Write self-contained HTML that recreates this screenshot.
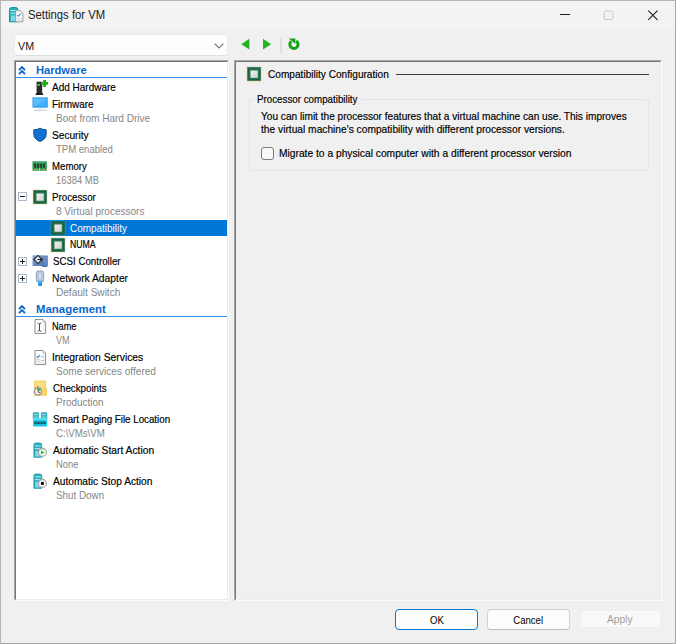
<!DOCTYPE html>
<html>
<head>
<meta charset="utf-8">
<title>Settings for VM</title>
<style>
*{box-sizing:border-box;margin:0;padding:0}
html,body{width:676px;height:644px;overflow:hidden;background:#f0f0f0}
body{position:relative;font-family:"Liberation Sans",sans-serif;font-size:11px;color:#000}
.abs{position:absolute}
#win{position:absolute;left:0;top:0;width:676px;height:644px;background:#f0f0f0;border:1px solid #b6b6b6;border-right-color:#a6a6a6;border-bottom-color:#a6a6a6}
#title{position:absolute;left:1px;top:1px;width:674px;height:29px;background:#f3f3f3}
#ttext{position:absolute;left:28.1px;top:8px;font-size:12px;line-height:14px;color:#1a1a1a;white-space:nowrap;transform:scaleX(0.94);transform-origin:0 0}
#combo{position:absolute;left:14px;top:34px;width:214px;height:22px;background:#fdfdfd;border:1px solid #ebebeb;border-bottom-color:#e0e0e0;border-radius:3px}
#combo span{position:absolute;left:3px;top:4px;font-size:11.5px;line-height:14px;color:#1a1a1a;transform:scaleX(0.93);transform-origin:0 0}
.panel{position:absolute;top:60px;height:541px;border-top:1px solid #a8a8a8;border-left:1px solid #a8a8a8;border-right:1px solid #fdfdfd;border-bottom:1px solid #fdfdfd}
.panel i{position:absolute;left:0;top:0;right:0;bottom:0;border-top:1px solid #747474;border-left:1px solid #747474;border-right:1px solid #ececec;border-bottom:1px solid #ececec}
#tree{left:14px;width:215px;background:#fff}
#right{left:234px;width:428px;background:#f0f0f0}
.t{position:absolute;white-space:nowrap;line-height:14px;font-size:11px;transform:scaleX(0.92);transform-origin:0 0}
.n{color:#000;-webkit-text-stroke:0.18px #000}
.w{color:#fff}
.s{color:#868686}
.h{color:#0a64cc;font-weight:bold;transform:scaleX(1.04)}
.hl{position:absolute;left:16px;width:211px;height:1px;background:#3a8ee6}
.btn{position:absolute;top:609px;width:83px;height:21px;border-radius:4px;background:#fdfdfd;border:1px solid #d0d0d0;border-bottom-color:#bcbcbc;text-align:center;font-size:11px;line-height:19px}
.btn span{display:inline-block;transform:scaleX(0.87);position:relative;top:0.7px}
</style>
</head>
<body>
<svg width="0" height="0" style="position:absolute"><defs>
<linearGradient id="gsil" x1="0" y1="0" x2="1" y2="1"><stop offset="0" stop-color="#f4f4f4"/><stop offset="0.5" stop-color="#e2e2e2"/><stop offset="1" stop-color="#cfcfcf"/></linearGradient>
<linearGradient id="gmon" x1="0" y1="0" x2="1" y2="1"><stop offset="0" stop-color="#63c4ff"/><stop offset="0.5" stop-color="#55bcff"/><stop offset="0.55" stop-color="#45b0fb"/><stop offset="1" stop-color="#3aa8f6"/></linearGradient>
<linearGradient id="gscsi" x1="0" y1="0" x2="1" y2="1"><stop offset="0" stop-color="#8fb0dc"/><stop offset="0.5" stop-color="#5f88bf"/><stop offset="1" stop-color="#3f68a0"/></linearGradient>
</defs></svg>
<div id="win"></div>
<div id="title"></div>
<div id="ttext">Settings for VM</div>
<div id="combo"><span>VM</span></div>
<div id="tree" class="panel"><i></i></div>
<div id="right" class="panel"><i></i></div>
<div class="hl" style="top:77px"></div>
<div class="hl" style="top:316px"></div>
<div class="abs" style="left:16px;top:220px;width:211px;height:16px;background:#0078d7"></div>
<div class="abs" style="left:396px;top:74px;width:253px;height:1px;background:#3c3c3c"></div>
<div class="abs" style="left:249px;top:99px;width:400px;height:72px;border:1px solid #e4e4e4;border-radius:3px"></div>
<div class="abs" style="left:254px;top:94px;width:107px;height:10px;background:#f0f0f0"></div>
<div class="abs" style="left:261px;top:147px;width:13px;height:13px;border:1px solid #7c7c7c;border-radius:3px;background:#f8f8f8"></div>
<div class="t h" style="left:35.50px;top:63px;transform:scaleX(1.0124)">Hardware</div>
<div class="t n" style="left:52.40px;top:80px;transform:scaleX(0.9088)">Add Hardware</div>
<div class="t n" style="left:52.40px;top:97px;transform:scaleX(0.9072)">Firmware</div>
<div class="t s" style="left:55.70px;top:111px;transform:scaleX(0.9104)">Boot from Hard Drive</div>
<div class="t n" style="left:52.40px;top:128px;transform:scaleX(0.9208)">Security</div>
<div class="t s" style="left:56.20px;top:142px;transform:scaleX(0.8680)">TPM enabled</div>
<div class="t n" style="left:52.40px;top:159px;transform:scaleX(0.8760)">Memory</div>
<div class="t s" style="left:56.40px;top:173px;transform:scaleX(0.8565)">16384 MB</div>
<div class="t n" style="left:52.40px;top:190px;transform:scaleX(0.8847)">Processor</div>
<div class="t s" style="left:55.70px;top:204px;transform:scaleX(0.9117)">8 Virtual processors</div>
<div class="t w" style="left:70.30px;top:221px;transform:scaleX(0.9041)">Compatibility</div>
<div class="t n" style="left:70.30px;top:237px;transform:scaleX(0.7923)">NUMA</div>
<div class="t n" style="left:52.90px;top:254px;transform:scaleX(0.8838)">SCSI Controller</div>
<div class="t n" style="left:52.40px;top:271px;transform:scaleX(0.9349)">Network Adapter</div>
<div class="t s" style="left:56.20px;top:285px;transform:scaleX(0.9144)">Default Switch</div>
<div class="t h" style="left:36.20px;top:302px;transform:scaleX(1.0373)">Management</div>
<div class="t n" style="left:52.40px;top:319px;transform:scaleX(0.8320)">Name</div>
<div class="t s" style="left:56.20px;top:333px;transform:scaleX(0.8251)">VM</div>
<div class="t n" style="left:51.90px;top:350px;transform:scaleX(0.9387)">Integration Services</div>
<div class="t s" style="left:56.20px;top:364px;transform:scaleX(0.9147)">Some services offered</div>
<div class="t n" style="left:52.90px;top:381px;transform:scaleX(0.8841)">Checkpoints</div>
<div class="t s" style="left:56.20px;top:395px;transform:scaleX(0.9049)">Production</div>
<div class="t n" style="left:52.90px;top:412px;transform:scaleX(0.8864)">Smart Paging File Location</div>
<div class="t s" style="left:56.20px;top:426px;transform:scaleX(0.8770)">C:\VMs\VM</div>
<div class="t n" style="left:52.90px;top:443px;transform:scaleX(0.9348)">Automatic Start Action</div>
<div class="t s" style="left:56.20px;top:457px;transform:scaleX(0.8514)">None</div>
<div class="t n" style="left:52.90px;top:474px;transform:scaleX(0.9236)">Automatic Stop Action</div>
<div class="t s" style="left:56.20px;top:488px;transform:scaleX(0.8940)">Shut Down</div>
<div class="t n" style="left:268.40px;top:67px;transform:scaleX(0.9188)">Compatibility Configuration</div>
<div class="t n" style="left:257.10px;top:92px;transform:scaleX(0.8883)">Processor compatibility</div>
<div class="t n" style="left:260.80px;top:109px;transform:scaleX(0.9188)">You can limit the processor features that a virtual machine can use. This improves</div>
<div class="t n" style="left:261.00px;top:121.5px;transform:scaleX(0.9285)">the virtual machine's compatibility with different processor versions.</div>
<div class="t n" style="left:278.60px;top:146px;transform:scaleX(0.9313)">Migrate to a physical computer with a different processor version</div>
<svg class="abs" style="left:18px;top:66px" width="8" height="9" viewBox="0 0 8 9"><path d="M1 4.1 L4 1.1 L7 4.1 M1 8.1 L4 5.1 L7 8.1" fill="none" stroke="#0a64cc" stroke-width="1.9"/></svg>
<svg class="abs" style="left:18px;top:305px" width="8" height="9" viewBox="0 0 8 9"><path d="M1 4.1 L4 1.1 L7 4.1 M1 8.1 L4 5.1 L7 8.1" fill="none" stroke="#0a64cc" stroke-width="1.9"/></svg>
<svg class="abs" style="left:34px;top:79px" width="15" height="17" viewBox="0 0 15 17"><rect x="2.6" y="2.7" width="5.6" height="11.8" fill="#2a2a2a"/><path d="M1.3 15.9 L2.4 14 H8.4 L9.5 15.9 Z" fill="#1e1e1e"/><rect x="3.6" y="4.8" width="2.2" height="2.2" fill="#46d246"/><path d="M9.2 0.9 H12 V3 H14.1 V5.8 H12 V7.9 H9.2 V5.8 H7.1 V3 H9.2 Z" fill="#19b219"/></svg>
<svg class="abs" style="left:32px;top:97px" width="16" height="15" viewBox="0 0 16 15"><rect x="1" y="0.9" width="14.2" height="9.2" fill="url(#gmon)" stroke="#2f93e6" stroke-width="1"/><rect x="7" y="10.6" width="2.5" height="1" fill="#9cc4e4"/><rect x="2" y="12.8" width="12.5" height="1" fill="#b9ccd9"/></svg>
<svg class="abs" style="left:33px;top:127px" width="14" height="16" viewBox="0 0 14 16"><path d="M7 1.1 Q9.4 2.8 13.2 2.8 V7.5 Q13.2 11.9 7 14.6 Q0.8 11.9 0.8 7.5 V2.8 Q4.6 2.8 7 1.1 Z" fill="#0f6fd3" stroke="#1f4f8e" stroke-width="1"/></svg>
<svg class="abs" style="left:32px;top:161px" width="15" height="10" viewBox="0 0 15 10"><rect x="0.5" y="0.3" width="14.3" height="9.5" fill="#279a57"/><rect x="2.2" y="2.6" width="1.8" height="4.2" fill="#33382c"/><rect x="5.1" y="2.6" width="1.8" height="4.2" fill="#33382c"/><rect x="8.1" y="2.6" width="1.8" height="4.2" fill="#33382c"/><rect x="11" y="2.6" width="1.8" height="4.2" fill="#33382c"/><rect x="2.2" y="1.2" width="10.6" height="0.9" fill="#4fb57a"/><rect x="2.2" y="8" width="3.4" height="1.2" fill="#d0a645"/><rect x="9.8" y="8" width="3.4" height="1.2" fill="#d0a645"/><rect x="7.3" y="7.4" width="0.8" height="2.5" fill="#fff"/></svg>
<svg class="abs" style="left:18px;top:192px" width="9" height="9" viewBox="0 0 9 9"><rect x="0.5" y="0.5" width="8" height="8" fill="#fff" stroke="#a9b9cc"/><rect x="2" y="4" width="5" height="1" fill="#222"/></svg>
<svg class="abs" style="left:32px;top:189px" width="16" height="16" viewBox="-1 -1 16 16"><rect x="0" y="-0.1" width="14.1" height="14.2" fill="none" stroke="#e6b644" stroke-width="0.8" stroke-dasharray="0.9 1.1"/><rect x="0.3" y="0.2" width="13.5" height="13.6" fill="#1f6343"/><rect x="2.2" y="2.2" width="9.7" height="9.7" fill="#2a7651"/><rect x="3.5" y="3.5" width="7.3" height="7.3" fill="url(#gsil)"/></svg>
<svg class="abs" style="left:50px;top:220px" width="16" height="16" viewBox="-1 -1 16 16"><rect x="0" y="-0.1" width="14.1" height="14.2" fill="none" stroke="#e6b644" stroke-width="0.8" stroke-dasharray="0.9 1.1"/><rect x="0.3" y="0.2" width="13.5" height="13.6" fill="#1f6343"/><rect x="2.2" y="2.2" width="9.7" height="9.7" fill="#2a7651"/><rect x="3.5" y="3.5" width="7.3" height="7.3" fill="url(#gsil)"/></svg>
<svg class="abs" style="left:50px;top:237px" width="16" height="16" viewBox="-1 -1 16 16"><rect x="0" y="-0.1" width="14.1" height="14.2" fill="none" stroke="#e6b644" stroke-width="0.8" stroke-dasharray="0.9 1.1"/><rect x="0.3" y="0.2" width="13.5" height="13.6" fill="#1f6343"/><rect x="2.2" y="2.2" width="9.7" height="9.7" fill="#2a7651"/><rect x="3.5" y="3.5" width="7.3" height="7.3" fill="url(#gsil)"/></svg>
<svg class="abs" style="left:245.5px;top:66px" width="16" height="16" viewBox="-1 -1 16 16"><rect x="0" y="-0.1" width="14.1" height="14.2" fill="none" stroke="#e6b644" stroke-width="0.8" stroke-dasharray="0.9 1.1"/><rect x="0.3" y="0.2" width="13.5" height="13.6" fill="#1f6343"/><rect x="2.2" y="2.2" width="9.7" height="9.7" fill="#2a7651"/><rect x="3.5" y="3.5" width="7.3" height="7.3" fill="url(#gsil)"/></svg>
<svg class="abs" style="left:18px;top:257px" width="9" height="9" viewBox="0 0 9 9"><rect x="0.5" y="0.5" width="8" height="8" fill="#fff" stroke="#a9b9cc"/><rect x="2" y="4" width="5" height="1" fill="#222"/><rect x="4" y="2" width="1" height="5" fill="#222"/></svg>
<svg class="abs" style="left:18px;top:274px" width="9" height="9" viewBox="0 0 9 9"><rect x="0.5" y="0.5" width="8" height="8" fill="#fff" stroke="#a9b9cc"/><rect x="2" y="4" width="5" height="1" fill="#222"/><rect x="4" y="2" width="1" height="5" fill="#222"/></svg>
<svg class="abs" style="left:32px;top:254px" width="16" height="14" viewBox="0 0 16 14"><path d="M0.5 1.2 H11.3 L12.3 1.6 H15.8 V11.2 L15 13.1 H10.6 L9.6 12 H0.5 Z" fill="url(#gscsi)"/><rect x="11.6" y="2.6" width="3.2" height="8.6" fill="#6f93c4" opacity="0.75"/><path d="M1.8 5.5 L6 1.4 L10.2 5.5 L6 9.6 Z" fill="#e4e8ee" stroke="#222" stroke-width="1.05"/><path d="M5.6 5.5 H10.6" stroke="#1a1a1a" stroke-width="1.1"/></svg>
<svg class="abs" style="left:35px;top:270px" width="10" height="17" viewBox="0 0 10 17"><path d="M1.4 2.6 Q1.4 1.1 3 1.1 H7 Q8.6 1.1 8.6 2.6 V10.4 Q8.6 11.9 7 11.9 H3 Q1.4 11.9 1.4 10.4 Z" fill="#bccce3" stroke="#8199bb" stroke-width="0.9"/><rect x="3.9" y="3.2" width="2.2" height="5.2" rx="0.6" fill="#f3f6fa" stroke="#8da3c2" stroke-width="0.5"/><rect x="2.2" y="10" width="5.6" height="1.7" fill="#7cc0ea"/><rect x="3.1" y="11.8" width="3.9" height="4.3" fill="#2a9fd9"/></svg>
<svg class="abs" style="left:34px;top:319px" width="13" height="16" viewBox="0 0 13 16"><path d="M1 0.5 H9.1 L11.6 3 V14.6 H1 Z" fill="#fdfdfd" stroke="#8f8f8f" stroke-width="1"/><path d="M9.1 0.5 V3 H11.6" fill="#eee" stroke="#aaa" stroke-width="0.8"/><rect x="9.6" y="4" width="1" height="9.6" fill="#e6e6e6"/><path d="M3.6 4.3 Q5 4.3 5.5 5 Q6 4.3 7.4 4.3 M5.5 5 V11.5 M3.6 12.2 Q5 12.2 5.5 11.5 Q6 12.2 7.4 12.2" fill="none" stroke="#333" stroke-width="0.9"/></svg>
<svg class="abs" style="left:34px;top:350px" width="13" height="16" viewBox="0 0 13 16"><path d="M1 0.5 H9.1 L11.6 3 V14.6 H1 Z" fill="#fdfdfd" stroke="#8f8f8f" stroke-width="1"/><path d="M9.1 0.5 V3 H11.6" fill="#eee" stroke="#aaa" stroke-width="0.8"/><rect x="9.6" y="4" width="1" height="9.6" fill="#e6e6e6"/><path d="M2.6 6.4 L3.8 7.6 L5.8 5.2" fill="none" stroke="#3b8ff0" stroke-width="1.3"/><rect x="6.5" y="6.3" width="3.5" height="1" fill="#b5b5b5"/><rect x="3" y="9.3" width="2.3" height="2" fill="none" stroke="#c0c0c0" stroke-width="0.6"/><rect x="6.5" y="10" width="3.5" height="1" fill="#c5c5c5"/><rect x="3" y="12.5" width="7" height="0.8" fill="#d5d5d5"/></svg>
<svg class="abs" style="left:32px;top:380px" width="16" height="17" viewBox="0 0 16 17"><path d="M2.4 1 H13.8 V8.6 H14.6 V15.4 H2.4 Z" fill="#f8d867" stroke="#ecc858" stroke-width="0.7"/><rect x="3.4" y="2" width="9.4" height="5.5" fill="#fbe083"/><circle cx="5.9" cy="11.5" r="3.6" fill="#f1f1f1" stroke="#979797" stroke-width="1.4"/><rect x="5" y="6.2" width="1.8" height="1.5" fill="#8d8d8d"/><rect x="2.4" y="7.6" width="1.5" height="1.3" fill="#9a9a9a" transform="rotate(-40 3.1 8.2)"/><rect x="7.9" y="7.6" width="1.5" height="1.3" fill="#9a9a9a" transform="rotate(40 8.6 8.2)"/><path d="M5 8.3 L8.9 9.2 L6 12 Z" fill="#27ad33"/><path d="M5.9 11.5 L7.8 13" stroke="#d83a2e" stroke-width="1.1"/></svg>
<svg class="abs" style="left:32px;top:412px" width="16" height="15" viewBox="0 0 16 15"><path d="M0.8 1.6 Q0.8 0.2 2.3 0.2 H5.6 Q6.9 0.2 6.9 1.6 V6.8 H0.8 Z" fill="#20a6b6"/><path d="M8.9 1.6 Q8.9 0.2 10.4 0.2 H13.7 Q15.2 0.2 15.2 1.6 V6.8 H8.9 Z" fill="#20a6b6"/><rect x="1.6" y="1.8" width="4.6" height="0.9" fill="#b8ecf2"/><rect x="9.7" y="1.8" width="4.6" height="0.9" fill="#b8ecf2"/><rect x="1.6" y="3.7" width="4.6" height="0.8" fill="#8fe0ea"/><rect x="9.7" y="3.7" width="4.6" height="0.8" fill="#8fe0ea"/><rect x="1.6" y="5.2" width="4.6" height="1.3" fill="#6fd6e2"/><rect x="9.7" y="5.2" width="4.6" height="1.3" fill="#6fd6e2"/><rect x="1" y="6.4" width="14.2" height="8.1" fill="#1fcbea"/><rect x="1" y="6.4" width="14.2" height="1.5" fill="#5fe0f5"/><rect x="2.4" y="9.6" width="2.3" height="2.4" fill="#0c4f5c"/><rect x="5.4" y="9.6" width="2.3" height="2.4" fill="#0c4f5c"/><rect x="8.4" y="9.6" width="2.3" height="2.4" fill="#0c4f5c"/><rect x="11.4" y="9.6" width="2.3" height="2.4" fill="#0c4f5c"/><rect x="2.4" y="12.6" width="11.3" height="1" fill="#12b2cf"/></svg>
<svg class="abs" style="left:33px;top:442px" width="16" height="17" viewBox="0 0 16 17"><path d="M0.9 2.8 Q0.9 1 2.8 1 H6.9 Q8.7 1 8.7 2.8 V15.3 H0.9 Z" fill="#27aebd" stroke="#1796a4" stroke-width="0.8"/><rect x="1.8" y="3.4" width="6" height="1" fill="#bfeef3"/><rect x="1.8" y="6.2" width="6" height="1" fill="#bfeef3"/><rect x="2.2" y="9" width="4.6" height="5.5" fill="#7fdbe6"/><circle cx="9.4" cy="10.4" r="3.9" fill="#fff" stroke="#a6a6a6" stroke-width="1.3"/><path d="M7.9 8.2 L11.5 10.4 L7.9 12.6 Z" fill="#22c322"/></svg>
<svg class="abs" style="left:33px;top:473px" width="16" height="17" viewBox="0 0 16 17"><path d="M0.9 2.8 Q0.9 1 2.8 1 H6.9 Q8.7 1 8.7 2.8 V15.3 H0.9 Z" fill="#27aebd" stroke="#1796a4" stroke-width="0.8"/><rect x="1.8" y="3.4" width="6" height="1" fill="#bfeef3"/><rect x="1.8" y="6.2" width="6" height="1" fill="#bfeef3"/><rect x="2.2" y="9" width="4.6" height="5.5" fill="#7fdbe6"/><circle cx="9.4" cy="10.4" r="3.9" fill="#fff" stroke="#a6a6a6" stroke-width="1.3"/><rect x="7.9" y="8.9" width="3" height="3" fill="#111"/></svg>
<svg class="abs" style="left:9px;top:6.5px" width="16" height="17" viewBox="0 0 16 17"><path d="M0.5 2.5 Q0.5 0.5 2.5 0.5 H6.8 Q8.8 0.5 8.8 2.5 V14.8 H0.5 Z" fill="#2ab0bf" stroke="#1a95a3"/><rect x="1.5" y="3" width="6.3" height="1" fill="#bfeef3"/><rect x="1.5" y="5.7" width="6.3" height="1" fill="#bfeef3"/><rect x="2" y="8.5" width="4.6" height="5.5" fill="#7fdbe6"/><path d="M6.6 3.6 H11.4 L13.9 6.1 V14.9 H6.6 Z" fill="#f7f7f7" stroke="#959595" stroke-width="0.9"/><path d="M8.2 8 L9.5 9.2 L11.8 6.6" fill="none" stroke="#4a98ea" stroke-width="1.2"/><rect x="7.8" y="11.5" width="5" height="0.8" fill="#d0d0d0"/><rect x="7.8" y="13" width="5" height="0.8" fill="#d8d8d8"/></svg>
<svg class="abs" style="left:240px;top:36px" width="62" height="18" viewBox="0 0 62 18"><path d="M9.4 2.7 V13.6 L1.3 8.2 Z" fill="#20b520"/><path d="M23 2.7 V13.6 L31.1 8.2 Z" fill="#20b520"/><rect x="40.6" y="1" width="1" height="16" fill="#cdcdcd"/><path d="M56.2 4.9 A4.1 4.1 0 1 1 51.2 5.3" fill="none" stroke="#17a117" stroke-width="3"/><path d="M48.8 2.4 H55.4 V8 Z" fill="#17a117"/></svg>
<svg class="abs" style="left:555px;top:5px" width="110" height="20" viewBox="0 0 110 20"><rect x="5" y="9" width="10" height="1" fill="#222"/><rect x="49.2" y="6.1" width="8.6" height="8.4" rx="1.5" fill="none" stroke="#c9c9c9" stroke-width="1"/><path d="M93.3 5.6 L102.5 14.8 M102.5 5.6 L93.3 14.8" stroke="#1a1a1a" stroke-width="1.1"/></svg>
<svg class="abs" style="left:214.4px;top:42.6px" width="10" height="6" viewBox="0 0 10 6"><path d="M0.6 0.6 L5 4.9 L9.4 0.6" fill="none" stroke="#777" stroke-width="1.2"/></svg>
<div class="btn" style="left:395px;border-color:#0078d4"><span>OK</span></div>
<div class="btn" style="left:487px"><span>Cancel</span></div>
<div class="btn" style="left:579.5px;top:609.7px;width:81.5px;height:18.8px;line-height:17.3px;color:#a0a0a0;border-color:#efefef;background:#f9f9f9"><span style="transform:scaleX(0.93)">Apply</span></div>
</body>
</html>
